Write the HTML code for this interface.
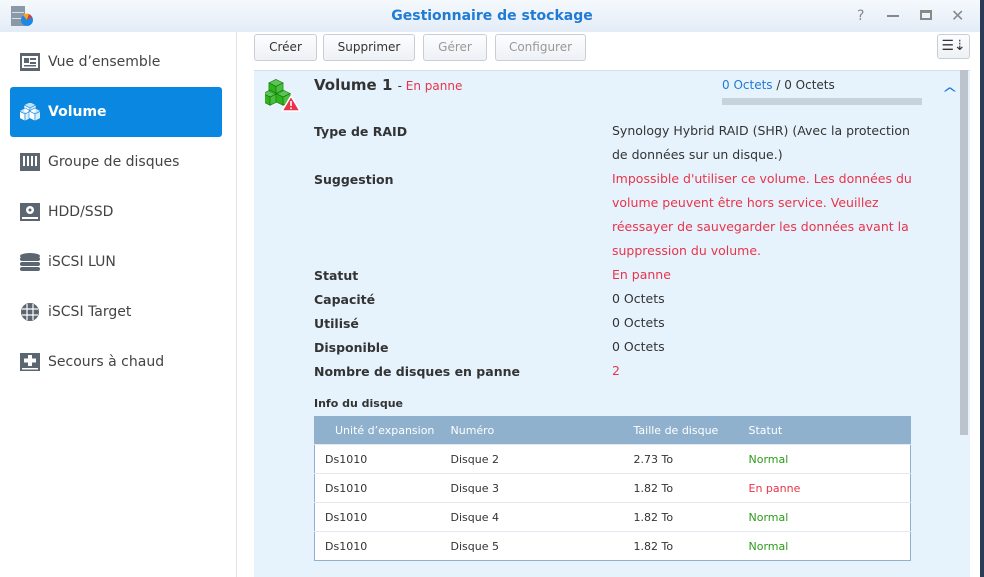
<!DOCTYPE html>
<html><head><meta charset="utf-8"><style>
*{margin:0;padding:0;box-sizing:border-box}
body{width:984px;height:577px;overflow:hidden;background:#fff;font-family:"DejaVu Sans","Liberation Sans",sans-serif;color:#333;position:relative}
.title{position:absolute;left:0;top:0;width:984px;height:32px;background:linear-gradient(#f5f9fd,#e3ecf7)}
.title h1{position:absolute;left:0;width:984px;text-align:center;top:8px;font-size:14px;color:#1f7bd4;font-weight:bold}
.ctl{position:absolute;top:8px;font-size:14px;color:#888}
.side{position:absolute;left:0;top:32px;width:237px;height:545px;border-right:1px solid #e3e3e3}
.item{position:absolute;left:10px;width:212px;height:50px;font-size:14px;line-height:50px;padding-left:38px;color:#444}
.item.on{background:#0a87e0;color:#fff;border-radius:3px;font-weight:bold}
.ic{position:absolute;left:10px;top:16px;width:20px;height:18px}
.btn{position:absolute;top:34px;height:27px;border:1px solid #c8ced6;border-radius:3px;background:linear-gradient(#fcfdfe,#eef1f5);font-size:12px;line-height:25px;text-align:center;color:#333}
.btn.dis{color:#999}
.panel{position:absolute;left:254px;top:70px;width:716px;height:507px;background:#e6f3fd;border-top:1px solid #cfe0ee}
.lab{position:absolute;left:314px;font-size:12.5px;font-weight:bold;color:#333}
.val{position:absolute;left:612px;font-size:12.5px;color:#333;line-height:24px}
.red{color:#e8344a}
table{position:absolute;left:314px;top:416px;width:597px;border-collapse:collapse;border:1px solid #8fb1cd;font-size:11px;background:#fff;table-layout:fixed}
th{background:#8fb1cd;color:#fff;font-weight:normal;height:28px;text-align:left}
td{height:29px;border-top:1px solid #e2e9f0}
.g{color:#2e9a1c}
</style></head><body>
<div class="title">
<svg style="position:absolute;left:10px;top:5px" width="24" height="22"><rect x="1" y="1" width="14" height="20" fill="#8a99a8"/><rect x="2" y="7" width="12" height="1" fill="#ddd"/><rect x="2" y="13" width="12" height="1" fill="#ddd"/><circle cx="17" cy="15" r="6" fill="#1e88e5"/><path d="M17 15 L13 10 A6 6 0 0 1 19 9Z" fill="#f5a623"/><path d="M17 15 L19 9 A6 6 0 0 1 22 12Z" fill="#e53935"/></svg>
<h1>Gestionnaire de stockage</h1>
<span class="ctl" style="left:857px">?</span>
<span style="position:absolute;left:887px;top:15px;width:12px;height:2px;background:#888"></span>
<span style="position:absolute;left:920px;top:10px;width:12px;height:10px;border:2px solid #888;border-top-width:3px"></span>
<span class="ctl" style="left:951px;top:6px;font-size:16px">✕</span>
</div>
<svg width="0" height="0" style="position:absolute"><defs>
<g id="cube"><path d="M0 -6L6 -3L0 0L-6 -3Z" fill-opacity=".75"/><path d="M-6 -3L0 0V7L-6 4Z"/><path d="M6 -3L0 0V7L6 4Z" fill-opacity=".85"/></g>
</defs></svg>
<div class="side">
<div class="item" style="top:5px"><svg class="ic" viewBox="0 0 20 18"><rect x="0" y="0" width="20" height="18" fill="#5c6670"/><rect x="2" y="3" width="16" height="12" fill="#fff"/><rect x="4" y="5" width="5" height="5" fill="#5c6670"/><rect x="10" y="5" width="6" height="2" fill="#5c6670"/><rect x="10" y="9" width="6" height="2" fill="#5c6670"/><rect x="4" y="12" width="12" height="1.5" fill="#5c6670"/></svg>Vue d’ensemble</div>
<div class="item on" style="top:55px"><svg class="ic" viewBox="0 0 20 18" fill="#fff" stroke="#0a87e0" stroke-width=".6"><use href="#cube" x="10" y="5"/><use href="#cube" x="5" y="11"/><use href="#cube" x="15" y="11"/></svg>Volume</div>
<div class="item" style="top:105px"><svg class="ic" viewBox="0 0 20 18"><rect width="20" height="18" fill="#5c6670"/><rect x="3" y="3" width="2" height="10" fill="#fff"/><rect x="7" y="3" width="2" height="10" fill="#fff"/><rect x="11" y="3" width="2" height="10" fill="#fff"/><rect x="15" y="3" width="2" height="10" fill="#fff"/></svg>Groupe de disques</div>
<div class="item" style="top:155px"><svg class="ic" viewBox="0 0 20 18"><rect width="20" height="18" fill="#5c6670"/><circle cx="10" cy="7" r="4" fill="#fff"/><circle cx="10" cy="7" r="1.5" fill="#5c6670"/><rect x="2" y="14" width="16" height="2" fill="#fff"/></svg>HDD/SSD</div>
<div class="item" style="top:205px"><svg class="ic" viewBox="0 0 20 18" fill="#5c6670"><ellipse cx="10" cy="3" rx="10" ry="3"/><rect y="4" width="20" height="4" rx="2"/><rect y="9" width="20" height="4" rx="2"/><rect y="14" width="20" height="4" rx="2"/></svg>iSCSI LUN</div>
<div class="item" style="top:255px"><svg class="ic" viewBox="0 0 20 18"><circle cx="10" cy="9" r="9" fill="#5c6670"/><path d="M2 6h16M2 12h16M7 1v16M13 1v16" stroke="#fff" stroke-width="1.2"/></svg>iSCSI Target</div>
<div class="item" style="top:305px"><svg class="ic" viewBox="0 0 20 18"><rect width="20" height="18" fill="#5c6670"/><rect x="8" y="2" width="4" height="11" fill="#fff"/><rect x="4" y="5.5" width="12" height="4" fill="#fff"/><rect x="2" y="15" width="16" height="1.5" fill="#fff"/></svg>Secours à chaud</div>
</div>
<div class="btn" style="left:254px;width:63px">Créer</div>
<div class="btn" style="left:323px;width:92px">Supprimer</div>
<div class="btn dis" style="left:423px;width:64px">Gérer</div>
<div class="btn dis" style="left:495px;width:91px">Configurer</div>
<div class="btn" style="left:937px;width:33px;height:25px;font-size:14px;line-height:22px">☰⇣</div>
<div class="panel"></div>
<div style="position:absolute;left:960px;top:70px;width:8px;height:365px;background:#bcc3ca"></div>
<div style="position:absolute;left:980px;top:0;width:4px;height:577px;background:#2b3a55"></div>
<svg style="position:absolute;left:265px;top:78px" width="36" height="36" viewBox="0 0 36 36"><g fill="#2db51d" stroke="#17700e" stroke-width=".5" transform="translate(-2,-1) scale(1.18)"><use href="#cube" x="11" y="8"/><use href="#cube" x="6" y="17"/><use href="#cube" x="17" y="17"/></g><path d="M26 18l9 15H17z" fill="#e8344a" stroke="#fff" stroke-width="1.5"/><rect x="25.2" y="23" width="1.6" height="5" fill="#fff"/><rect x="25.2" y="29.5" width="1.6" height="1.6" fill="#fff"/></svg>
<div style="position:absolute;left:314px;top:76px;font-size:15px;font-weight:bold;color:#333">Volume 1 <span style="font-size:12px;font-weight:normal">- <span class="red">En panne</span></span></div>
<div style="position:absolute;left:722px;top:78px;font-size:12px"><span style="color:#1f7bd4">0 Octets</span> / 0 Octets</div>
<div style="position:absolute;left:722px;top:98px;width:200px;height:7px;background:#c8d2db"></div>
<div style="position:absolute;left:944px;top:86px;font-size:14px;color:#1f7bd4;transform:scaleX(1.4)">^</div>
<div class="lab" style="top:124px">Type de RAID</div>
<div class="val" style="top:119px">Synology Hybrid RAID (SHR) (Avec la protection<br>de données sur un disque.)</div>
<div class="lab" style="top:172px">Suggestion</div>
<div class="val red" style="top:167px">Impossible d'utiliser ce volume. Les données du<br>volume peuvent être hors service. Veuillez<br>réessayer de sauvegarder les données avant la<br>suppression du volume.</div>
<div class="lab" style="top:268px">Statut</div><div class="val red" style="top:263px">En panne</div>
<div class="lab" style="top:292px">Capacité</div><div class="val" style="top:287px">0 Octets</div>
<div class="lab" style="top:316px">Utilisé</div><div class="val" style="top:311px">0 Octets</div>
<div class="lab" style="top:340px">Disponible</div><div class="val" style="top:335px">0 Octets</div>
<div class="lab" style="top:364px">Nombre de disques en panne</div><div class="val red" style="top:359px">2</div>
<div style="position:absolute;left:314px;top:397px;font-size:11px;font-weight:bold">Info du disque</div>
<table>
<colgroup><col style="width:136px"><col style="width:183px"><col style="width:115px"><col></colgroup>
<tr><th style="padding-left:20px">Unité d’expansion</th><th>Numéro</th><th>Taille de disque</th><th>Statut</th></tr>
<tr><td style="padding-left:10px">Ds1010</td><td>Disque 2</td><td>2.73 To</td><td class="g">Normal</td></tr>
<tr><td style="padding-left:10px">Ds1010</td><td>Disque 3</td><td>1.82 To</td><td class="red">En panne</td></tr>
<tr><td style="padding-left:10px">Ds1010</td><td>Disque 4</td><td>1.82 To</td><td class="g">Normal</td></tr>
<tr><td style="padding-left:10px">Ds1010</td><td>Disque 5</td><td>1.82 To</td><td class="g">Normal</td></tr>
</table>
</body></html>
